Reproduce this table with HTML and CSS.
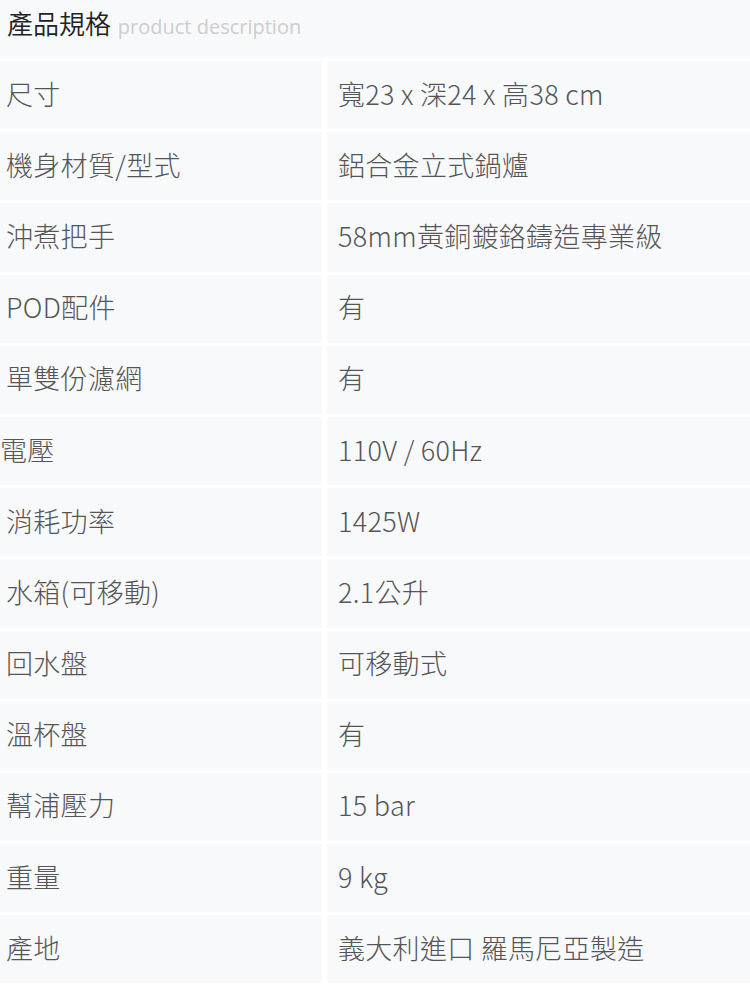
FILE: index.html
```html
<!DOCTYPE html>
<html lang="zh-Hant">

<head>
    <meta charset="UTF-8">
    <meta name="viewport" content="width=device-width, initial-scale=1.0">
    <title>產品規格</title>
    <link rel="stylesheet" href="styles.css">
</head>

<body>

    <div class="spec">
        <div class="spec-title">產品規格 <span class="sub">product description</span></div>

        <div class="spec-table">
            <div class="cell label">尺寸</div>
            <div class="cell value">寬23 x 深24 x 高38 cm</div>

            <div class="cell label">機身材質/型式</div>
            <div class="cell value">鋁合金立式鍋爐</div>

            <div class="cell label">沖煮把手</div>
            <div class="cell value">58mm黃銅鍍鉻鑄造專業級</div>

            <div class="cell label">POD配件</div>
            <div class="cell value">有</div>

            <div class="cell label">單雙份濾網</div>
            <div class="cell value">有</div>

            <div class="cell label flush">電壓</div>
            <div class="cell value">110V / 60Hz</div>

            <div class="cell label">消耗功率</div>
            <div class="cell value">1425W</div>

            <div class="cell label">水箱(可移動)</div>
            <div class="cell value">2.1公升</div>

            <div class="cell label">回水盤</div>
            <div class="cell value">可移動式</div>

            <div class="cell label">溫杯盤</div>
            <div class="cell value">有</div>

            <div class="cell label">幫浦壓力</div>
            <div class="cell value">15 bar</div>

            <div class="cell label">重量</div>
            <div class="cell value">9 kg</div>

            <div class="cell label">產地</div>
            <div class="cell value">義大利進口 羅馬尼亞製造</div>
        </div>
    </div>

</body>

</html>
```

FILE: styles.css
```css
/* Page */
body {
    margin: 0;
    padding: 0;
    background-color: #ffffff;
    font-family: "Noto Sans CJK TC", "Noto Sans", sans-serif;
    font-weight: 300;
    color: #555;
}

.spec {
    width: 750px;
}

/* Title bar */
.spec-title {
    height: 58px;
    line-height: 46px;
    padding-left: 7px;
    background-color: #f8f9fb;
    font-size: 26px;
    font-weight: 350;
    color: #222;
    box-sizing: border-box;
}

.spec-title .sub {
    font-family: "Open Sans", "Noto Sans", sans-serif;
    font-size: 20px;
    font-weight: 400;
    color: #cdcdcd;
    margin-left: 1px;
}

/* Spec table */
.spec-table {
    display: grid;
    grid-template-columns: 322px 1fr;
    grid-auto-rows: 68.2px;
    column-gap: 5px;
    row-gap: 3px;
    margin-top: 3px;
}

.cell {
    background-color: #f8f9fb;
    display: flex;
    align-items: center;
    font-size: 27px;
    letter-spacing: 0.3px;
    color: #555;
    padding-bottom: 4px;
    box-sizing: border-box;
}

.label {
    padding-left: 6px;
}

.label.flush {
    padding-left: 0;
}

.value {
    padding-left: 11px;
}
```
